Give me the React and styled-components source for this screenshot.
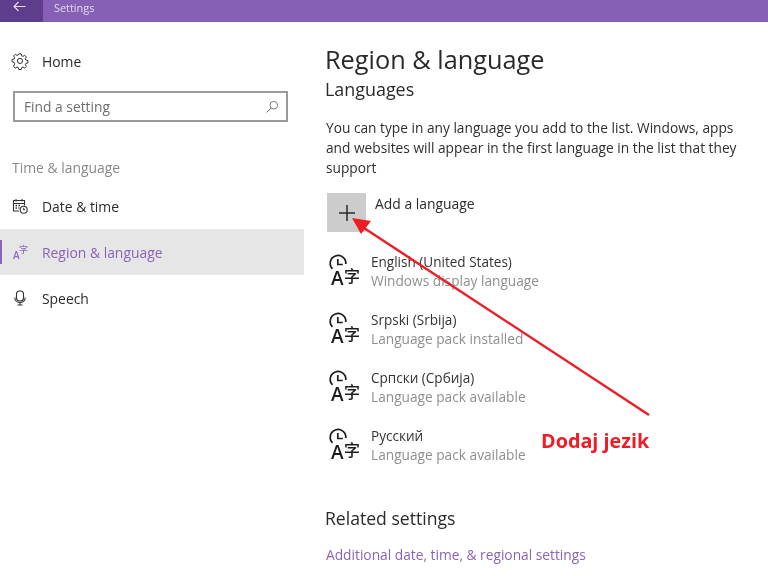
import React from "react";
import styled, { createGlobalStyle } from "styled-components";

const Global = createGlobalStyle`
  html, body { margin: 0; padding: 0; background: #fff; }
  body { font-family: "Open Sans", "Noto Sans", sans-serif; overflow: hidden; }
  #root { width: 768px; height: 576px; overflow: hidden; }
`;
const Page = styled.div`
  position: relative; width: 768px; height: 576px; overflow: hidden;
  display: flex; flex-direction: column; filter: blur(0.35px);
`;
const TitleBar = styled.header`
  height: 22px; background: #8560b5; display: flex; align-items: center; flex: none;
`;
const BackButton = styled.div`
  width: 43px; height: 22px; background: #5e3d8c; display: flex; justify-content: center; color: #e8def4;
  svg { margin-top: 1px; margin-left: -4px; }
`;
const TitleText = styled.span`
  margin-left: 11px; margin-top: -7px; font-size: 10.9px; color: #e3d8f0;
`;
const Body = styled.div`
  flex: 1; display: grid; grid-template-columns: 304px 1fr; min-height: 0;
`;
const Side = styled.nav`
  display: flex; flex-direction: column; padding-top: 16px;
`;
const NavItem = styled.div`
  height: 46px; display: flex; align-items: center; gap: 14px; padding-left: 12px; position: relative;
  font-size: 13.9px; color: ${p => (p.$active ? "#8a63bb" : "#2b2b2b")};
  background: ${p => (p.$active ? "#e6e6e6" : "transparent")};
  &::before {
    content: ""; display: ${p => (p.$active ? "block" : "none")};
    position: absolute; left: 0; top: 11px; width: 2px; height: 24px; background: #8a63bb;
  }
`;
const IconSlot = styled.span`
  width: 16px; height: 16px; display: flex; align-items: center; justify-content: center; flex: none;
  svg { overflow: visible; }
`;
const Search = styled.div`
  margin: 7px 16px 0 13px; height: 31px; box-sizing: border-box; border: 2px solid #9a9a9a;
  display: flex; align-items: center; justify-content: space-between; padding: 0 7px 0 9px;
  font-size: 13.8px; color: #6f6f6f;
`;
const SectionLabel = styled.div`
  margin: 36px 0 5px 12px; font-size: 13.9px; line-height: 20px; color: #8a8a8a;
`;
const Main = styled.main`
  padding: 19px 0 0 21px; display: flex; flex-direction: column; align-items: flex-start;
`;
const Title = styled.h1`
  margin: 0; font-weight: 400; font-size: 25.3px; line-height: 36px; color: #2a2a2a;
`;
const Subtitle = styled.h2`
  margin: 0; font-weight: 400; font-size: 17.9px; line-height: 24px; color: #2a2a2a;
`;
const Para = styled.p`
  margin: 17px 0 0 1px; width: 430px; font-size: 13.72px; line-height: 20px; color: #2e2e2e;
`;
const AddRow = styled.div`
  margin: 15px 0 0 2px; display: flex; gap: 9px;
`;
const AddTile = styled.div`
  width: 39px; height: 39px; background: #cccccc; display: flex; align-items: center; justify-content: center;
`;
const AddLabel = styled.span`
  font-size: 13.9px; line-height: 20px; margin-top: 1px; color: #2b2b2b;
`;
const LangList = styled.div`
  margin: 10px 0 0 5px; display: flex; flex-direction: column;
`;
const LangRow = styled.div`
  height: 58px; display: flex; gap: 10px; align-items: center;
`;
const LangGlyph = styled.svg`
  overflow: visible; flex: none;
`;
const LangText = styled.div`
  display: flex; flex-direction: column;
`;
const LangName = styled.span`
  font-size: 13.55px; line-height: 18px; color: #333;
`;
const LangStatus = styled.span`
  font-size: 13.7px; line-height: 19px; color: #8f8f8f;
`;
const Related = styled.h2`
  margin: 32px 0 0; font-weight: 400; font-size: 17.6px; line-height: 24px; color: #2a2a2a;
`;
const RelatedLink = styled.a`
  margin: 15px 0 0 1px; font-size: 13.75px; line-height: 20px; color: #8a63bb;
`;
const ArrowLayer = styled.svg`
  position: absolute; left: 0; top: 0; pointer-events: none;
`;
const Callout = styled.div`
  position: absolute; left: 541px; top: 428px; font-size: 19.8px; line-height: 25px; font-weight: 700;
  color: #ee1c25;
`;

const LangIcon = () => (
  <LangGlyph width="31" height="32" viewBox="0 0 31 32">
    <path d="M2.500 13.800 A7.800 7.800 0 1 1 15.800 9" fill="none" stroke="#1c1c1c" strokeWidth="1.700" />
    <path d="M7.800 4v5.500h5" fill="none" stroke="#1c1c1c" strokeWidth="1.700" />
    <text x="1" y="30" fontSize="19" fontWeight="600" fontFamily="'Open Sans',sans-serif" fill="#1c1c1c">A</text>
    <text x="14" y="26.500" fontSize="16" fontWeight="500" fontFamily="'Noto Sans CJK SC',sans-serif" fill="#1c1c1c">字</text>
  </LangGlyph>
);

const langs = [
  ["English (United States)", "Windows display language"],
  ["Srpski (Srbija)", "Language pack installed"],
  ["Српски (Србија)", "Language pack available"],
  ["Русский", "Language pack available"],
];

export default function App() {
  return (
    <Page>
      <Global />
      <TitleBar>
        <BackButton>
          <svg width="13" height="11" viewBox="0 0 13 11" fill="none" stroke="currentColor" strokeWidth="1.100">
            <path d="M12.500 5.500H1M5.500 1 1 5.500 5.500 10" />
          </svg>
        </BackButton>
        <TitleText>Settings</TitleText>
      </TitleBar>
      <Body>
        <Side>
          <NavItem>
            <IconSlot>
              <svg width="16" height="16" viewBox="0 0 16 16" fill="none" stroke="#333" strokeWidth="1">
                <path d="M6.800 1h2.400l.4 2 1.400.6 1.700-1.100 1.700 1.700-1.100 1.700.6 1.400 2 .4v2.400l-2 .4-.6 1.400 1.100 1.700-1.700 1.700-1.700-1.100-1.400.6-.4 2H6.800l-.4-2-1.400-.6-1.700 1.100-1.700-1.700L2.700 10.900 2.100 9.500l-2-.4V6.700l2-.4.6-1.400L1.600 3.200 3.300 1.500 5 2.600l1.400-.6z" transform="translate(0 -.2)" />
                <circle cx="8" cy="7.900" r="2.600" />
              </svg>
            </IconSlot>
            Home
          </NavItem>
          <Search>
            Find a setting
            <svg width="14" height="14" viewBox="0 0 14 14" fill="none" stroke="#777" strokeWidth="1">
              <circle cx="8.800" cy="5.200" r="3.800" />
              <path d="M6 8 1.500 12.500" />
            </svg>
          </Search>
          <SectionLabel>Time &amp; language</SectionLabel>
          <NavItem>
            <IconSlot>
              <svg width="16" height="16" viewBox="0 0 16 16" fill="none" stroke="#333" strokeWidth="1.100">
                <path d="M7 13H1.500V2.500h11v5M1.500 5.500h11M4 1v2.500M10 1v2.500" />
                <path d="M3.500 7.500h1.500M6.500 7.500h1.500M3.500 10h1.500M6.500 10h1" strokeWidth="1.400" />
                <circle cx="11.700" cy="11.700" r="3.500" />
                <path d="M11.700 9.700v2h1.500" />
              </svg>
            </IconSlot>
            Date &amp; time
          </NavItem>
          <NavItem $active>
            <IconSlot>
              <svg width="16" height="16" viewBox="0 0 16 16" fill="#9068c8">
                <text x="1" y="15" fontSize="10" fontWeight="600" fontFamily="'Open Sans',sans-serif">A</text>
                <text x="7" y="8.500" fontSize="9" fontWeight="500" fontFamily="'Noto Sans CJK SC',sans-serif">字</text>
              </svg>
            </IconSlot>
            Region &amp; language
          </NavItem>
          <NavItem>
            <IconSlot>
              <svg width="16" height="16" viewBox="0 0 16 16" fill="none" stroke="#333" strokeWidth="1.100">
                <rect x="4.500" y="1" width="7" height="10" rx="3" />
                <path d="M3 7.500v1.200a5 3.800 0 0 0 10 0V7.500M8 12.500V15M5.500 15h5" />
              </svg>
            </IconSlot>
            Speech
          </NavItem>
        </Side>
        <Main>
          <Title>Region &amp; language</Title>
          <Subtitle>Languages</Subtitle>
          <Para>
            You can type in any language you add to the list. Windows, apps and websites will appear in the first language in the list that they support
          </Para>
          <AddRow>
            <AddTile>
              <svg width="16" height="16" viewBox="0 0 16 16" stroke="#2a2a2a" strokeWidth="1.500">
                <path d="M8 0v16M0 8h16" />
              </svg>
            </AddTile>
            <AddLabel>Add a language</AddLabel>
          </AddRow>
          <LangList>
            {langs.map(([name, status]) => (
              <LangRow key={name}>
                <LangIcon />
                <LangText>
                  <LangName>{name}</LangName>
                  <LangStatus>{status}</LangStatus>
                </LangText>
              </LangRow>
            ))}
          </LangList>
          <Related>Related settings</Related>
          <RelatedLink>Additional date, time, &amp; regional settings</RelatedLink>
        </Main>
      </Body>
      <ArrowLayer width="768" height="576" viewBox="0 0 768 576">
        <path d="M649 415 364 228" stroke="#ee1c25" strokeWidth="2.400" fill="none" />
        <path d="M352 218 371 221 361 234z" fill="#ee1c25" />
      </ArrowLayer>
      <Callout>Dodaj jezik</Callout>
    </Page>
  );
}
